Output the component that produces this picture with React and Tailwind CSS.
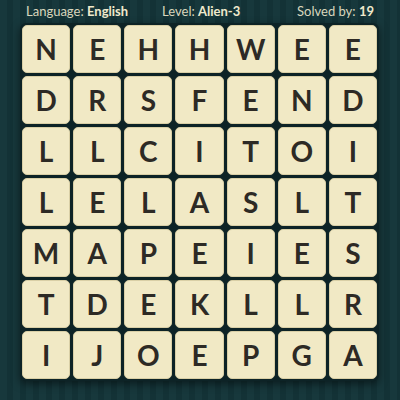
import React from 'react'

const rows = [
  'NEHHWEE',
  'DRSFEND',
  'LLCITOI',
  'LELASLT',
  'MAPEIES',
  'TDEKLLR',
  'IJOEPGA',
]

export default function App() {
  return (
    <div className="w-[400px] h-[400px] overflow-hidden bg-[repeating-linear-gradient(90deg,#17383c_0px,#17383c_7px,#133236_7px,#133236_13px)] font-['Lato',sans-serif] flex flex-col">
      <div className="h-[23px] flex items-center pl-[26px] pr-[26px] text-[13px] text-[#d9d6bd]">
        <span>
          Language: <span className="font-bold text-[#efe9cc]">English</span>
        </span>
        <span className="ml-[34px]">
          Level: <span className="font-bold text-[#efe9cc]">Alien-3</span>
        </span>
        <span className="ml-auto">
          Solved by: <span className="font-bold text-[#efe9cc]">19</span>
        </span>
      </div>
      <div className="ml-[20px] w-[359px] p-[2px] bg-[#0d2326] rounded-md shadow-[0_3px_8px_rgba(0,0,0,0.5)]">
        <div className="grid grid-cols-7 gap-[3px]">
          {rows.map((row) =>
            row.split('').map((ch, i) => (
              <div
                key={row + i}
                className="h-[48px] rounded-[5px] bg-[#f1e9c5] border border-[#d9cfa6] flex items-center justify-center text-[28px] font-bold text-[#2d2a25] leading-none"
              >
                {ch}
              </div>
            ))
          )}
        </div>
      </div>
    </div>
  )
}
